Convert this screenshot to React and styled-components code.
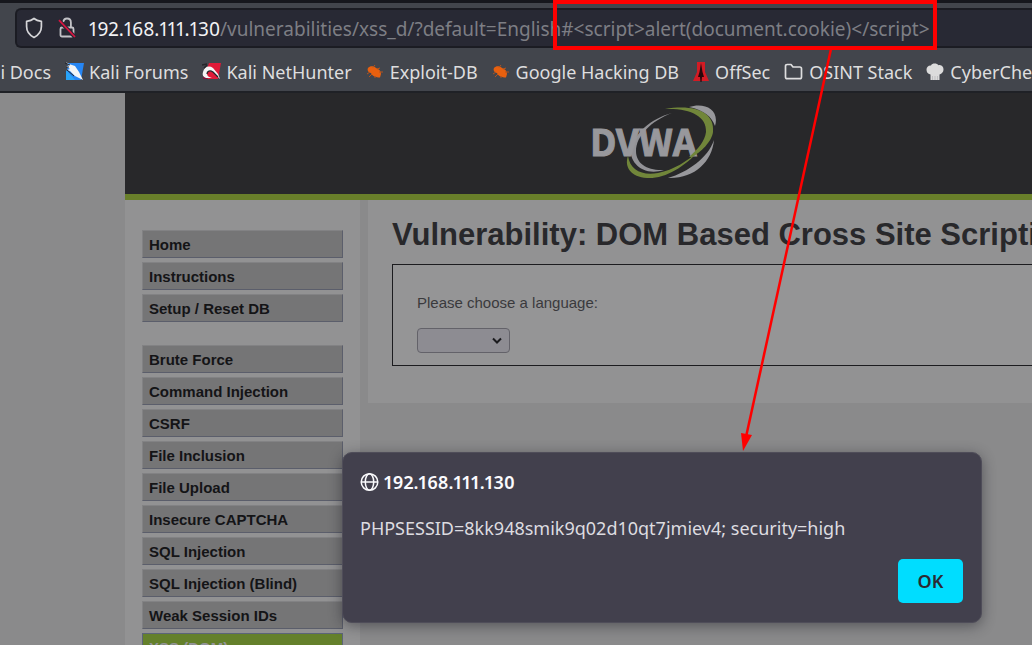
import React from 'react';
import styled, { createGlobalStyle } from 'styled-components';

const Global = createGlobalStyle`
  *, *::before, *::after { box-sizing: border-box; }
  body { margin: 0; background: #8a8a8b; }
`;

const uiFont = '"Noto Sans", sans-serif';
const pageFont = '"Liberation Sans", Arial, sans-serif';

const Window = styled.div`
  position: relative;
  display: flex;
  flex-direction: column;
  height: 100vh;
  overflow: hidden;
`;

const Chrome = styled.header`
  flex: none;
  background: #42454c;
  border-top: 3px solid #16171d;
  border-bottom: 2px solid #1f2126;
  font-family: ${uiFont};
  padding-top: 5px;
`;

const UrlBar = styled.div`
  display: flex;
  align-items: center;
  height: 40px;
  margin-left: 15px;
  padding-left: 8px;
  background: #282934;
  border: 2px solid #1b1c23;
  border-right: 0;
  border-radius: 6px 0 0 6px;
  svg { flex: none; }
`;

const Address = styled.div`
  margin-left: 13px;
  padding-top: 2px;
  font-size: 19px;
  line-height: 26px;
  white-space: nowrap;
  color: #7d7e84;
`;

const Host = styled.span`
  color: #f3f3f5;
  font-variant-numeric: proportional-nums;
`;

const Bookmarks = styled.nav`
  display: flex;
  align-items: center;
  gap: 14px;
  height: 43px;
  padding-top: 4px;
  overflow: hidden;
`;

const Bookmark = styled.a`
  display: flex;
  flex: none;
  align-items: center;
  justify-content: flex-end;
  gap: 5px;
  width: ${(p) => (p.$clipped ? '51px' : 'auto')};
  font-size: 18px;
  line-height: 26px;
  color: #dededf;
  text-decoration: none;
  white-space: nowrap;
  svg { flex: none; }
`;

const Page = styled.div`
  flex: 1;
  min-height: 0;
  padding-left: 125px;
  font-family: ${pageFont};
  color: #28282b;
`;

const Banner = styled.div`
  height: 107px;
  padding: 10px 0 0 465px;
  background: #28282a;
  border-bottom: 6px solid #697f2a;
  svg { display: block; }
`;

const Columns = styled.div`
  display: flex;
  align-items: flex-start;
`;

const Menu = styled.nav`
  flex: none;
  width: 235px;
  padding: 30px 17px;
  background: #929293;
`;

const MenuGroup = styled.ul`
  display: flex;
  flex-direction: column;
  gap: 4px;
  margin: 0 0 23px;
  padding: 0;
  list-style: none;
`;

const MenuLink = styled.a`
  display: block;
  height: 28px;
  padding: 0 6px;
  border: 1px solid;
  border-color: ${(p) => (p.$active ? '#5c6478' : '#828284 #5b5e6b #5b5e6b #828284')};
  background: ${(p) => (p.$active ? '#64802b' : '#757576')};
  color: ${(p) => (p.$active ? '#93949a' : '#141416')};
  font-size: 15px;
  font-weight: bold;
  line-height: 27px;
  text-decoration: none;
  white-space: nowrap;
`;

const Main = styled.main`
  flex: 1 0 auto;
  margin-left: 8px;
  padding: 14px 24px 37px;
  background: #929293;
`;

const Title = styled.h1`
  margin: 0 0 9px;
  font-size: 31px;
  line-height: 41px;
  white-space: nowrap;
`;

const Panel = styled.form`
  padding: 27px 24px 12px;
  border: 1px solid #1c1c1f;
  background: #959596;
`;

const Label = styled.label`
  display: block;
  margin-bottom: 14px;
  font-size: 15px;
  line-height: 22px;
  color: #3a3a3d;
`;

const SelectBox = styled.div`
  position: relative;
  width: 93px;
  svg { position: absolute; right: 8px; top: 9px; pointer-events: none; }
`;

const Select = styled.select`
  display: block;
  appearance: none;
  width: 100%;
  height: 25px;
  border: 1px solid #636269;
  border-radius: 4px;
  background: #8d8c92;
`;

const Dialog = styled.section`
  position: absolute;
  left: 342px;
  top: 452px;
  width: 640px;
  padding: 16px 18px 19px 17px;
  border: 1px solid #4f4d59;
  border-radius: 10px;
  background: #42404d;
  box-shadow: 0 3px 14px rgba(20, 20, 28, 0.45);
  color: #fbfbfe;
  font-family: ${uiFont};
`;

const Origin = styled.h2`
  display: flex;
  align-items: center;
  gap: 5px;
  margin: 0 0 20px;
  font-size: 18px;
  font-weight: 600;
  line-height: 26px;
  font-variant-numeric: proportional-nums;
`;

const Message = styled.p`
  margin: 0 0 18px;
  font-size: 18px;
  line-height: 26px;
  color: #dddce0;
`;

const Actions = styled.div`
  display: flex;
  justify-content: flex-end;
`;

const OkButton = styled.button`
  width: 65px;
  height: 44px;
  border: 0;
  border-radius: 5px;
  background: #00ddff;
  color: #2b2a33;
  font: 600 18px ${uiFont};
`;

const Annotation = styled.svg`
  position: absolute;
  left: 0;
  top: 0;
  pointer-events: none;
`;

const ShieldIcon = () => (
  <svg width="18" height="22" viewBox="0 0 18 22" fill="none" stroke="#d5d5d8" strokeWidth="1.7" strokeLinejoin="round">
    <path d="M9 1.500C11 3.200 13.500 4 16.400 4.300V9.500C16.400 14.500 12.800 18.500 9 20.400 5.200 18.500 1.600 14.500 1.600 9.500V4.300C4.500 4 7 3.200 9 1.500Z" />
  </svg>
);

const LockGlyph = styled.svg`
  margin-left: 15px;
`;

const LockIcon = () => (
  <LockGlyph width="18" height="22" viewBox="0 0 18 22" fill="none" stroke="#c3c3c7" strokeWidth="1.8">
    <rect x="2.500" y="10.500" width="13" height="9" rx="1.500" />
    <path d="M5.200 5.200C5.600 2.800 7 1.500 9 1.500c2.400 0 3.900 1.700 3.900 4v5" />
    <path d="M1.200 3.500 16.800 20" stroke="#282934" strokeWidth="4" />
    <path d="M1 3.200 17 20" stroke="#d81440" strokeWidth="1.800" />
  </LockGlyph>
);

const ForumsIcon = () => (
  <svg width="19" height="20" viewBox="0 0 19 20">
    <path d="M3 1h16l-3 17H1Z" fill="#2686f4" />
    <path d="M1 8 10 18H1Z" fill="#28a4f8" />
    <path d="M1 0 4 2 10 4 14 10 18 18 10 14 5 9 2 8 5 7 1 4 4 4Z" fill="#f2f4f6" />
    <path d="M0 1 5 3M1 5 4 5M2 8 9 14" stroke="#22252b" strokeWidth="1" fill="none" />
  </svg>
);

const HunterIcon = () => (
  <svg width="19" height="20" viewBox="0 0 19 20">
    <path d="M7 1H19L16 17H1Z" fill="#e01a38" />
    <path d="M1 17 2 12 6 17Z" fill="#7b163e" />
    <path d="M1 10C2 5 7 3 11 6L16 12 18 17 11 10C8 8 5 9 5 12 5 14 7 15 10 16L4 16C1 15 0 13 1 10Z" fill="#f5f5f5" />
    <path d="M0 3 5 2M2 6 5 3M5 12C5 9 8 8 11 10L16 15" stroke="#25252a" strokeWidth="1.300" fill="none" />
  </svg>
);

const BugIcon = () => (
  <svg width="19" height="18" viewBox="0 0 19 18">
    <path d="M2 5C4 2.500 8 3 10 5 13 6 15 8 15 11L14 14.500C10 14.500 6 13 5 10 2 9.500 1 7 2 5Z" fill="#e8600f" />
    <path d="M7 4.500 9 2M11 6 14 5M13 9 17 9M4 9 1 11M6 11 3 14M9 13 9 15" stroke="#b5531c" strokeWidth="1" fill="none" />
  </svg>
);

const OffSecIcon = () => (
  <svg width="17" height="20" viewBox="0 0 17 20">
    <path d="M4 0h8v10l4 9H0l4-9Z" fill="#d31b24" />
    <path d="M8 1 9.500 10 11 15 9 15 8.500 20H7.500L7 15 5 15 6.500 10Z" fill="#26080b" />
  </svg>
);

const FolderIcon = () => (
  <svg width="20" height="18" viewBox="0 0 20 18" fill="none" stroke="#dededf" strokeWidth="1.700" strokeLinejoin="round">
    <path d="M1.500 3.200Q1.500 1.500 3.200 1.500H7L9 4H15.800Q17.500 4 17.500 5.700V14Q17.500 15.700 15.800 15.700H3.200Q1.500 15.700 1.500 14Z" />
  </svg>
);

const ChefIcon = () => (
  <svg width="19" height="18" viewBox="0 0 19 18">
    <path d="M4.500 17V11.500C1.500 11 .5 9 .5 6.500 .5 4 2.500 2.200 5 2.500 6 0 11 0 12.500 2.200 16 1.500 17.500 4 17.500 6.500 17.500 9 16 10.500 13.500 11.500V17Z" fill="#dcdcdc" />
    <path d="M6.500 13V17M9 13V17M11.500 13V17" stroke="#bfbfc1" />
  </svg>
);

const GlobeIcon = () => (
  <svg width="19" height="20" viewBox="0 0 19 20" fill="none" stroke="#fbfbfe" strokeWidth="1.500">
    <circle cx="9.500" cy="10" r="8.300" />
    <ellipse cx="9.500" cy="10" rx="4.200" ry="8.300" />
    <path d="M1.200 10H17.800" />
  </svg>
);

const Logo = () => (
  <svg width="130" height="80" viewBox="0 0 130 80" role="img" aria-label="DVWA">
    <path d="M82 10C61 18 46 33 46 48 46 61 58 68 74 67 52 74 39 58 41 46 45 30 60 16 82 10Z" fill="#929296" />
    <text x="0" y="53" fill="#98989c" stroke="#98989c" strokeWidth="1" fontFamily='"Noto Sans CJK SC", sans-serif' fontWeight="bold" fontSize="37">DVWA</text>
    <path d="M75 6C105 1 125 9 123 29 122 38 111 50 101 54L99 54C108 46 115 38 116 29 117 13 100 5 75 6Z" fill="#71863a" />
    <path d="M38 53C40 67 52 73 68 70 84 67 97 58 109 48 94 64 75 76 57 75 41 74 34 64 38 53Z" fill="#71863a" />
    <path d="M99 4C114 -1 130 6 125 23 122 14 114 7 99 4Z" fill="#98989c" />
    <path d="M124 37C122 59 104 76 78 75 98 69 118 55 124 37Z" fill="#98989c" />
  </svg>
);

const bookmarks = [
  ['Kali Forums', ForumsIcon],
  ['Kali NetHunter', HunterIcon],
  ['Exploit-DB', BugIcon],
  ['Google Hacking DB', BugIcon],
  ['OffSec', OffSecIcon],
  ['OSINT Stack', FolderIcon],
  ['CyberChef', ChefIcon],
];

const menu = [
  ['Home', 'Instructions', 'Setup / Reset DB'],
  [
    'Brute Force', 'Command Injection', 'CSRF', 'File Inclusion', 'File Upload',
    'Insecure CAPTCHA', 'SQL Injection', 'SQL Injection (Blind)', 'Weak Session IDs', 'XSS (DOM)',
  ],
];

export default function App() {
  return (
    <Window>
      <Global />
      <Chrome>
        <UrlBar>
          <ShieldIcon />
          <LockIcon />
          <Address>
            <Host>192.168.111.130</Host>
            {'/vulnerabilities/xss_d/?default=English#<script>alert(document.cookie)</script>'}
          </Address>
        </UrlBar>
        <Bookmarks>
          <Bookmark href="#" $clipped>Kali Docs</Bookmark>
          {bookmarks.map(([name, Icon]) => (
            <Bookmark href="#" key={name}><Icon />{name}</Bookmark>
          ))}
        </Bookmarks>
      </Chrome>

      <Page>
        <Banner><Logo /></Banner>
        <Columns>
          <Menu>
            {menu.map((group) => (
              <MenuGroup key={group[0]}>
                {group.map((item) => (
                  <li key={item}><MenuLink href="#" $active={item === 'XSS (DOM)'}>{item}</MenuLink></li>
                ))}
              </MenuGroup>
            ))}
          </Menu>
          <Main>
            <Title>Vulnerability: DOM Based Cross Site Scripting (XSS)</Title>
            <Panel>
              <Label htmlFor="language">Please choose a language:</Label>
              <SelectBox>
                <Select id="language" defaultValue="">
                  <option value=""></option>
                </Select>
                <svg width="10" height="8" viewBox="0 0 10 8" fill="none" stroke="#1b1b1e" strokeWidth="2">
                  <path d="M1 1.500 5 5.500 9 1.500" />
                </svg>
              </SelectBox>
            </Panel>
          </Main>
        </Columns>
      </Page>

      <Dialog role="alertdialog" aria-labelledby="origin">
        <Origin id="origin"><GlobeIcon />192.168.111.130</Origin>
        <Message>PHPSESSID=8kk948smik9q02d10qt7jmiev4; security=high</Message>
        <Actions><OkButton type="button">OK</OkButton></Actions>
      </Dialog>

      <Annotation width="1032" height="460" viewBox="0 0 1032 460">
        <rect x="555" y="2" width="380" height="46" fill="none" stroke="#ff0000" strokeWidth="4" />
        <path d="M831 49 746 437" stroke="#ff0000" strokeWidth="2.500" />
        <path d="M743 451 741 433 752 435Z" fill="#ff0000" />
      </Annotation>
    </Window>
  );
}
